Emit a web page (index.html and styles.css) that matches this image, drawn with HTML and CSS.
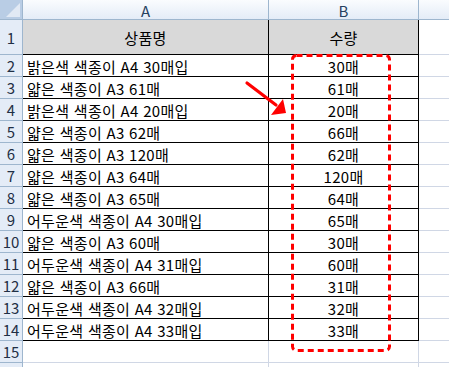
FILE: index.html
```html
<!DOCTYPE html>
<html lang="ko">
<head>
<meta charset="utf-8">
<link rel="stylesheet" href="styles.css">
</head>
<body>
<div class="sheet">
  <div class="grid">
    <div class="corner"><span class="tri"></span></div>
    <div class="colhead">A</div>
    <div class="colhead">B</div>
    <div class="colhead last"></div>

    <div class="rowhead r1">1</div>
    <div class="cell title a r1">상품명</div>
    <div class="cell title b r1">수량</div>
    <div class="cell empty r1"></div>

    <div class="rowhead">2</div><div class="cell a">밝은색 색종이 A4 30매입</div><div class="cell b">30매</div><div class="cell empty"></div>
    <div class="rowhead">3</div><div class="cell a">얇은 색종이 A3 61매</div><div class="cell b">61매</div><div class="cell empty"></div>
    <div class="rowhead">4</div><div class="cell a">밝은색 색종이 A4 20매입</div><div class="cell b">20매</div><div class="cell empty"></div>
    <div class="rowhead">5</div><div class="cell a">얇은 색종이 A3 62매</div><div class="cell b">66매</div><div class="cell empty"></div>
    <div class="rowhead">6</div><div class="cell a">얇은 색종이 A3 120매</div><div class="cell b">62매</div><div class="cell empty"></div>
    <div class="rowhead">7</div><div class="cell a">얇은 색종이 A3 64매</div><div class="cell b">120매</div><div class="cell empty"></div>
    <div class="rowhead">8</div><div class="cell a">얇은 색종이 A3 65매</div><div class="cell b">64매</div><div class="cell empty"></div>
    <div class="rowhead">9</div><div class="cell a">어두운색 색종이 A4 30매입</div><div class="cell b">65매</div><div class="cell empty"></div>
    <div class="rowhead">10</div><div class="cell a">얇은 색종이 A3 60매</div><div class="cell b">30매</div><div class="cell empty"></div>
    <div class="rowhead">11</div><div class="cell a">어두운색 색종이 A4 31매입</div><div class="cell b">60매</div><div class="cell empty"></div>
    <div class="rowhead">12</div><div class="cell a">얇은 색종이 A3 66매</div><div class="cell b">31매</div><div class="cell empty"></div>
    <div class="rowhead">13</div><div class="cell a">어두운색 색종이 A4 32매입</div><div class="cell b">32매</div><div class="cell empty"></div>
    <div class="rowhead">14</div><div class="cell a">어두운색 색종이 A4 33매입</div><div class="cell b">33매</div><div class="cell empty"></div>

    <div class="rowhead">15</div><div class="cell empty"></div><div class="cell empty"></div><div class="cell empty"></div>
    <div class="rowhead"></div><div class="cell empty"></div><div class="cell empty"></div><div class="cell empty"></div>
  </div>

  <svg class="overlay" width="449" height="367" viewBox="0 0 449 367">
    <rect x="292.5" y="55.5" width="97" height="295" rx="4" ry="4" fill="none" stroke="#ff0000" stroke-width="3" stroke-dasharray="6 4"/>
    <line x1="247" y1="83" x2="276" y2="105" stroke="#ff0000" stroke-width="3.2" stroke-linecap="round"/>
    <polygon points="286,113 271,115 283,99" fill="#ff0000"/>
  </svg>
</div>
</body>
</html>
```

FILE: styles.css
```css
html, body {
  margin: 0;
  padding: 0;
  background: #ffffff;
}

.sheet {
  position: relative;
  width: 449px;
  height: 367px;
  overflow: hidden;
  font-family: "Noto Sans CJK KR", "Noto Sans", sans-serif;
  font-size: 15px;
  color: #000;
}

.grid {
  display: grid;
  grid-template-columns: 23px 246px 150px 60px;
  grid-auto-rows: 22px;
  grid-template-rows: 20px 35px;
}

.grid > div {
  box-sizing: border-box;
  border-right: 1px solid #d0d7e5;
  border-bottom: 1px solid #d0d7e5;
  display: flex;
  align-items: center;
  line-height: 1;
  white-space: nowrap;
}

.corner {
  position: relative;
  background: #b9cde5;
  border-right-color: #9eb6ce !important;
  border-bottom-color: #9eb6ce !important;
}

.tri {
  position: absolute;
  right: 2px;
  bottom: 2px;
  width: 0;
  height: 0;
  border-left: 14px solid transparent;
  border-bottom: 14px solid #e1e9f4;
}

.colhead {
  justify-content: center;
  background: linear-gradient(#fafcfe, #e4ecf7);
  border-right-color: #9eb6ce !important;
  border-bottom-color: #9eb6ce !important;
  color: #27415f;
  font-size: 15px;
  padding-top: 1px;
}

.colhead.last {
  border-right: none !important;
}

.rowhead {
  justify-content: center;
  background: #e4ecf7;
  border-right-color: #9eb6ce !important;
  border-bottom-color: #9eb6ce !important;
  color: #1f2f45;
  font-size: 15px;
}

.cell.a,
.cell.b {
  border-right-color: #000 !important;
  border-bottom-color: #000 !important;
}

.cell.a {
  padding-left: 4px;
  padding-top: 1px;
  letter-spacing: 0.3px;
}

.cell.b {
  justify-content: center;
  padding-top: 1px;
  letter-spacing: 0.3px;
}

.cell.title {
  background: #d9d9d9;
  justify-content: center;
  padding-left: 0;
}

.overlay {
  position: absolute;
  left: 0;
  top: 0;
  pointer-events: none;
}
```
